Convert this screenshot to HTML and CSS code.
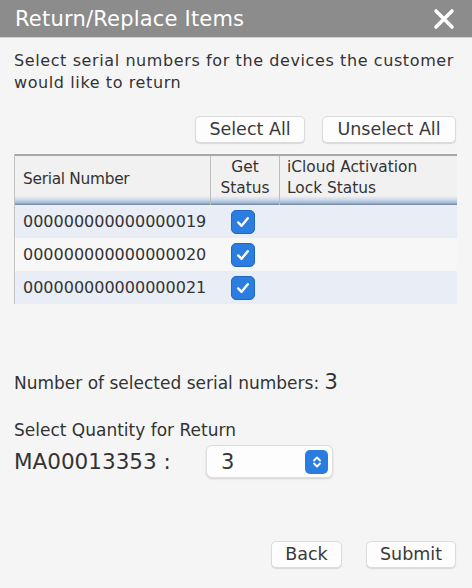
FILE: index.html
```html
<!DOCTYPE html>
<html>
<head>
<meta charset="utf-8">
<link rel="stylesheet" href="styles.css">
</head>
<body>
<div class="dialog">
  <div class="titlebar">
    <span class="title">Return/Replace Items</span>
    <svg class="close" width="22" height="22" viewBox="0 0 22 22"><path d="M3 3 L19 19 M19 3 L3 19" stroke="#fff" stroke-width="3.6" stroke-linecap="round"/></svg>
  </div>
  <div class="content">
    <p class="intro">Select serial numbers for the devices the customer would like to return</p>
    <div class="actions">
      <button class="btn sel">Select All</button>
      <button class="btn unsel">Unselect All</button>
    </div>
    <div class="table">
      <div class="thead">
        <div class="th c1">Serial Number</div>
        <div class="th c2">Get<br>Status</div>
        <div class="th c3">iCloud Activation<br>Lock Status</div>
      </div>
      <div class="row alt">
        <div class="td c1">000000000000000019</div>
        <div class="td c2"><span class="check"><svg width="16" height="16" viewBox="0 0 16 16"><path d="M3.2 8.4 L6.6 11.8 L12.8 4.2" fill="none" stroke="#fff" stroke-width="2.4" stroke-linecap="round" stroke-linejoin="round"/></svg></span></div>
        <div class="td c3"></div>
      </div>
      <div class="row">
        <div class="td c1">000000000000000020</div>
        <div class="td c2"><span class="check"><svg width="16" height="16" viewBox="0 0 16 16"><path d="M3.2 8.4 L6.6 11.8 L12.8 4.2" fill="none" stroke="#fff" stroke-width="2.4" stroke-linecap="round" stroke-linejoin="round"/></svg></span></div>
        <div class="td c3"></div>
      </div>
      <div class="row alt">
        <div class="td c1">000000000000000021</div>
        <div class="td c2"><span class="check"><svg width="16" height="16" viewBox="0 0 16 16"><path d="M3.2 8.4 L6.6 11.8 L12.8 4.2" fill="none" stroke="#fff" stroke-width="2.4" stroke-linecap="round" stroke-linejoin="round"/></svg></span></div>
        <div class="td c3"></div>
      </div>
    </div>
    <p class="count">Number of selected serial numbers: <span class="num">3</span></p>
    <p class="qty-label">Select Quantity for Return</p>
    <div class="qty-row">
      <span class="part">MA00013353 :</span>
      <div class="select">
        <span class="val">3</span>
        <span class="stepper"><svg width="12" height="16" viewBox="0 0 12 16"><path d="M3 6.5 L6 3.5 L9 6.5 M3 9.5 L6 12.5 L9 9.5" fill="none" stroke="#fff" stroke-width="1.8" stroke-linecap="round" stroke-linejoin="round"/></svg></span>
      </div>
    </div>
    <div class="footer">
      <button class="btn back">Back</button>
      <button class="btn submit">Submit</button>
    </div>
  </div>
</div>
</body>
</html>
```
FILE: styles.css
```css
html, body {
  margin: 0;
  padding: 0;
}
body {
  background: #f5f5f5;
  font-family: "DejaVu Sans", sans-serif;
  color: #333;
  width: 472px;
  height: 588px;
  overflow: hidden;
}
.titlebar {
  height: 37px;
  background: #8c8c8c;
  border-bottom: 1px solid #d0d0d0;
  display: flex;
  align-items: center;
  justify-content: space-between;
  padding: 0 15px 0 15px;
}
.title {
  color: #fff;
  font-size: 21px;
  letter-spacing: 0.2px;
}
.close {
  margin-right: 2px;
}
.content {
  padding: 0 16px 0 14px;
}
.intro {
  margin: 12px 0 0 0;
  font-size: 16px;
  letter-spacing: 0.6px;
  line-height: 22px;
  color: #333;
}
.actions {
  display: flex;
  justify-content: flex-end;
  gap: 17px;
  margin-top: 22px;
}
.btn {
  font-family: "DejaVu Sans", sans-serif;
  font-size: 17.5px;
  color: #3a3a3a;
  background: #fdfdfd;
  border: 1px solid #dcdcdc;
  border-radius: 5px;
  box-shadow: 0 1px 1px rgba(0,0,0,0.12);
  height: 27px;
  padding: 0;
  line-height: 25px;
}
.sel { width: 110px; }
.unsel { width: 134px; }
.table {
  margin-top: 11px;
  width: 442px;
  border-left: 1px solid #c4c4c4;
}
.thead, .row {
  display: grid;
  grid-template-columns: 196px 69px 176px;
}
.thead {
  height: 51px;
  border-top: 2px solid #a8a8a8;
  background: linear-gradient(to bottom, #f1f1f1 0px, #f1f1f1 40px, #c9d8ea 44px, #9fb6d2 47px, #6f8297 49px);
  box-sizing: border-box;
}
.th {
  font-size: 15.4px;
  line-height: 21px;
  color: #333;
  display: flex;
  align-items: center;
  padding-bottom: 5px;
  border-right: 1px solid #bdbdbd;
}
.th.c1 { padding-left: 8px; padding-top: 2px; letter-spacing: -0.3px; }
.th.c2 { justify-content: center; text-align: center; }
.th.c3 { padding-left: 7px; border-right: none; }
.row {
  height: 33px;
  background: #f7f7f7;
}
.row.alt {
  background: #e9edf5;
}
.td {
  display: flex;
  align-items: center;
  font-size: 16px;
}
.td.c1 { padding-left: 8px; }
.td.c2 { padding-left: 20px; }
.check {
  width: 24px;
  height: 24px;
  border-radius: 5px;
  background: #2b7de0;
  border: 1px solid #1f67c6;
  box-sizing: border-box;
  display: flex;
  align-items: center;
  justify-content: center;
}
.count {
  margin: 67px 0 0 0;
  font-size: 17px;
  line-height: 22px;
}
.num {
  font-size: 21px;
}
.qty-label {
  margin: 25px 0 0 0;
  font-size: 17px;
  line-height: 22px;
}
.qty-row {
  display: flex;
  align-items: center;
  margin-top: 4px;
}
.part {
  font-size: 21.5px;
  width: 192px;
}
.select {
  width: 127px;
  height: 33px;
  box-sizing: border-box;
  background: #fdfdfd;
  border: 1px solid #dedede;
  border-radius: 6px;
  box-shadow: 0 1px 2px rgba(0,0,0,0.15);
  display: flex;
  align-items: center;
  justify-content: space-between;
  padding: 0 4px 0 14px;
}
.val {
  font-size: 21px;
}
.stepper {
  width: 23px;
  height: 24px;
  border-radius: 5px;
  background: #2a7ce0;
  display: flex;
  align-items: center;
  justify-content: center;
}
.footer {
  display: flex;
  justify-content: flex-end;
  gap: 24px;
  margin-top: 63px;
}
.back { width: 71px; }
.submit { width: 90px; }
```
